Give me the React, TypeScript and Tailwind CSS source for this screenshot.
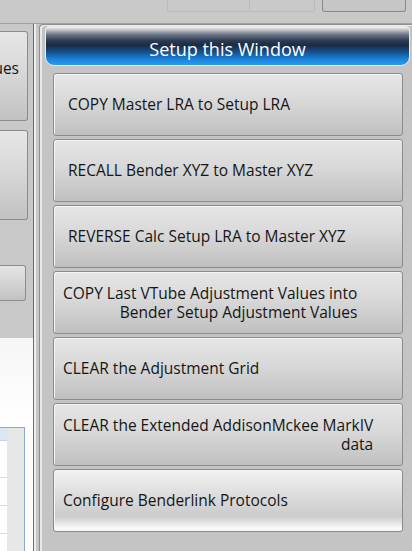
import React from "react";

type Btn = { lines: string[]; pl: string; glossy?: boolean };

const buttons: Btn[] = [
  { lines: ["COPY Master LRA to Setup LRA"], pl: "pl-[14px]" },
  { lines: ["RECALL Bender XYZ to Master XYZ"], pl: "pl-[14px]" },
  { lines: ["REVERSE Calc Setup LRA to Master XYZ"], pl: "pl-[14px]" },
  { lines: ["COPY Last VTube Adjustment Values into", "Bender Setup Adjustment Values"], pl: "pl-[9px]" },
  { lines: ["CLEAR the Adjustment Grid"], pl: "pl-[9px]" },
  { lines: ["CLEAR the Extended AddisonMckee MarkIV", "data"], pl: "pl-[9px]" },
  { lines: ["Configure Benderlink Protocols"], pl: "pl-[9px]", glossy: true },
];

function ActionButton({ b }: { b: Btn }) {
  const bg = b.glossy
    ? "bg-[linear-gradient(to_bottom,#f2f2f2_0%,#e0e0e0_35%,#cbcbcb_76%,#e6e6e6_87%,#fbfbfb_96%,#f4f4f4_100%)]"
    : "bg-[linear-gradient(to_bottom,#e6e6e6_0%,#dadada_40%,#c9c9c9_80%,#bfbfbf_100%)]";
  return (
    <div
      className={`h-[63px] shrink-0 flex items-center border border-[#8c8c8c] rounded-[3px] shadow-[inset_1px_1px_0_#f4f4f4] ${bg} ${b.pl}`}
    >
      <div className="inline-block text-right text-[15.5px] leading-[19px] text-[#161616] whitespace-nowrap">
        {b.lines.map((l, i) => (
          <div key={i}>{l}</div>
        ))}
      </div>
    </div>
  );
}

export default function App() {
  return (
    <div className="w-[412px] h-[551px] overflow-hidden bg-[#c6c6c6] flex flex-col font-['Open_Sans',sans-serif]">
      {/* top strip */}
      <div className="h-[24px] shrink-0 bg-[#c9c9c9] border-b border-[#a0a0a0] flex items-start">
        <div className="w-[167px] shrink-0" />
        <div className="w-[82px] h-[12px] border-l border-b border-[#bababa] rounded-bl-[2px]" />
        <div className="w-[66px] h-[12px] border-x border-b border-[#bababa] rounded-b-[2px]" />
        <div className="w-[7px]" />
        <div className="w-[84px] h-[12px] border-x border-b border-[#8a8a8a] rounded-b-[3px] bg-[#c6c6c6]" />
      </div>

      <div className="flex flex-1 min-h-0">
        {/* left panel */}
        <div className="w-[33px] shrink-0 flex flex-col bg-[#c8c8c8]">
          <div className="mt-[7px] w-[28px] h-[90px] shrink-0 border-y border-r border-[#8c8c8c] rounded-r-[3px] bg-[linear-gradient(to_bottom,#e6e6e6_0%,#d8d8d8_45%,#c2c2c2_100%)] overflow-hidden flex justify-end pt-[27px] pr-[8px]">
            <span className="text-[15.5px] leading-[19px] text-[#161616] whitespace-nowrap">Values</span>
          </div>
          <div className="mt-[9px] w-[28px] h-[90px] shrink-0 border-y border-r border-[#8c8c8c] rounded-r-[3px] bg-[linear-gradient(to_bottom,#e6e6e6_0%,#d8d8d8_45%,#c2c2c2_100%)]" />
          <div className="mt-[45px] w-[26px] h-[36px] shrink-0 border-y border-r border-[#8c8c8c] rounded-r-[3px] bg-[linear-gradient(to_bottom,#e4e4e4_0%,#d4d4d4_50%,#c2c2c2_100%)]" />
          <div className="mt-[37px] flex-1 bg-[linear-gradient(to_bottom,#f6f6f6,#ffffff_40%)] flex flex-col">
            <div className="mt-[89px] flex-1 flex">
              <div className="w-[25px] flex border-t border-r border-[#8aaace]">
                <div className="w-[7px] flex flex-col bg-white">
                  <div className="h-[13px] bg-[#dde7f3] border-b border-[#c6d6ea]" />
                  <div className="h-[37px] border-b border-[#d8d8d8]" />
                  <div className="h-[28px] border-b border-[#d8d8d8]" />
                  <div className="h-[28px] border-b border-[#d8d8d8]" />
                  <div className="flex-1" />
                </div>
                <div className="flex-1 bg-[#e6e6e6]" />
              </div>
              <div className="flex-1 bg-white" />
            </div>
          </div>
        </div>

        {/* separator */}
        <div className="w-px shrink-0 bg-[#6c6c6c]" />
        <div className="w-[2px] shrink-0 bg-[#eeeeee]" />
        <div className="w-[3px] shrink-0 bg-[#c6c6c6]" />

        {/* right panel */}
        <div className="flex-1 min-w-0 flex flex-col border-l border-t border-[#8e8e8e] rounded-tl-[4px] bg-[#c4c4c4] shadow-[inset_2px_1px_0_#e8e8e8]">
          <div className="pl-[5px] pt-[1px] pr-[1px] shrink-0">
            <div className="h-[40px] w-[365px] rounded-t-[4px] rounded-b-[9px] border border-[#eaeaea] bg-[linear-gradient(to_bottom,#f0f0f0_0%,#c4c8cc_7%,#6c7686_20%,#2c3a52_36%,#1c2a42_48%,#16508e_66%,#1a80d8_84%,#2a9cf4_100%)] flex items-center justify-center pt-[5px]">
              <span className="text-white text-[18px] leading-[22px]">Setup this Window</span>
            </div>
          </div>
          <div className="pl-[13px] pt-[7px] w-[363px] flex flex-col gap-[3px]">
            {buttons.map((b, i) => (
              <ActionButton key={i} b={b} />
            ))}
          </div>
        </div>
      </div>
    </div>
  );
}
